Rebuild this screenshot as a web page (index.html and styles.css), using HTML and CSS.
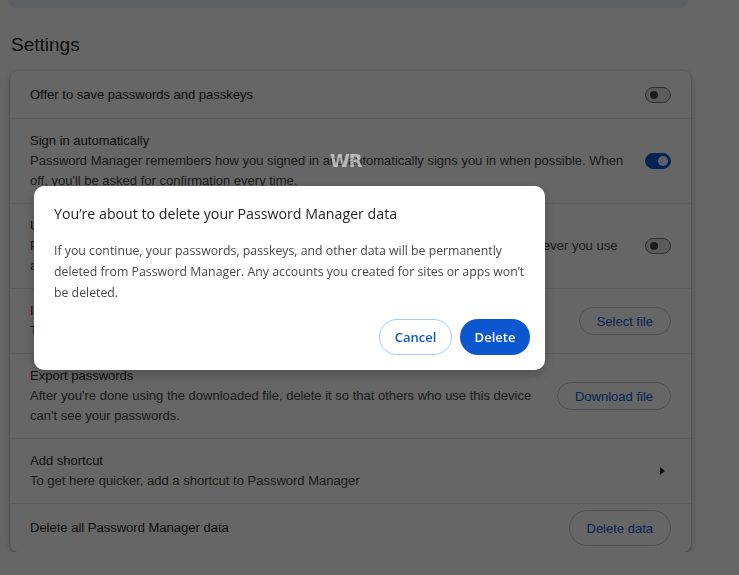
FILE: index.html
```html
<!DOCTYPE html>
<html lang="en">
<head>
    <meta charset="UTF-8">
    <meta name="viewport" content="width=device-width, initial-scale=1.0">
    <title>Password Manager Settings</title>
    <link rel="stylesheet" href="styles.css">
</head>
<body>
    <div class="page">
        <div class="top-card"></div>

        <h1 class="page-title">Settings</h1>

        <div class="card">
            <div class="row row-single">
                <div class="row-text">
                    <div class="label">Offer to save passwords and passkeys</div>
                </div>
                <span class="toggle"></span>
            </div>

            <div class="row">
                <div class="row-text">
                    <div class="label">Sign in automatically</div>
                    <div class="sub">Password Manager remembers how you signed in and automatically signs you in when possible. When off, you'll be asked for confirmation every time.</div>
                </div>
                <span class="toggle on"></span>
            </div>

            <div class="row">
                <div class="row-text">
                    <div class="label">Use Windows Hello when filling passwords</div>
                    <div class="sub">Password Manager will ask you to verify with your Windows Hello PIN or fingerprint whenever you use a saved password.</div>
                </div>
                <span class="toggle"></span>
            </div>

            <div class="row">
                <div class="row-text">
                    <div class="label">Import passwords</div>
                    <div class="sub">To import passwords to Password Manager, select a CSV file.</div>
                </div>
                <button class="btn-outline">Select file</button>
            </div>

            <div class="row">
                <div class="row-text">
                    <div class="label">Export passwords</div>
                    <div class="sub">After you're done using the downloaded file, delete it so that others who use this device can't see your passwords.</div>
                </div>
                <button class="btn-outline">Download file</button>
            </div>

            <div class="row">
                <div class="row-text">
                    <div class="label">Add shortcut</div>
                    <div class="sub">To get here quicker, add a shortcut to Password Manager</div>
                </div>
                <span class="arrow"></span>
            </div>

            <div class="row row-single">
                <div class="row-text">
                    <div class="label">Delete all Password Manager data</div>
                </div>
                <button class="btn-outline tall">Delete data</button>
            </div>
        </div>
    </div>

    <div class="scrim"></div>
    <div class="watermark">WR</div>

    <div class="dialog" role="dialog">
        <h2 class="dialog-title">You’re about to delete your Password Manager data</h2>
        <p class="dialog-body">If you continue, your passwords, passkeys, and other data will be permanently deleted from Password Manager. Any accounts you created for sites or apps won’t be deleted.</p>
        <div class="dialog-buttons">
            <button class="btn-cancel">Cancel</button>
            <button class="btn-delete">Delete</button>
        </div>
    </div>
</body>
</html>
```

FILE: styles.css
```css
body {
    margin: 0;
    padding: 0;
    background-color: #ffffff;
    color: #1f1f1f;
    font-family: 'Liberation Sans', Arial, sans-serif;
    font-size: 13px;
    overflow: hidden;
}

.page {
    padding: 0 48px 0 10px;
}

.top-card {
    height: 8px;
    margin: 0 3px 0 -2px;
    background-color: #e9eef6;
    border-radius: 0 0 14px 14px;
}

.page-title {
    margin: 25px 0 14px 1px;
    font-size: 19px;
    font-weight: normal;
    line-height: 24px;
    color: #1f1f1f;
}

.card {
    background-color: #ffffff;
    border-radius: 8px;
    box-shadow: 0 1px 3px rgba(0, 0, 0, 0.3), 0 2px 6px 1px rgba(0, 0, 0, 0.12);
}

.row {
    display: flex;
    align-items: center;
    gap: 20px;
    min-height: 48px;
    padding: 6px 20px;
    box-sizing: border-box;
    border-bottom: 1px solid #e8e8e8;
}

.row:last-child {
    border-bottom: none;
}

.row-text {
    flex: 1;
    padding: 6px 0;
    line-height: 20px;
}

.label {
    color: #1f1f1f;
}

.sub {
    color: #474747;
}

.toggle {
    position: relative;
    flex: none;
    width: 24px;
    height: 14px;
    border: 1px solid #747775;
    border-radius: 8px;
    background-color: #e3e3e3;
}

.toggle::after {
    content: "";
    position: absolute;
    left: 4px;
    top: 3px;
    width: 8px;
    height: 8px;
    border-radius: 50%;
    background-color: #474747;
}

.toggle.on {
    border-color: #0b57d0;
    background-color: #0b57d0;
}

.toggle.on::after {
    left: 12px;
    top: 2px;
    width: 10px;
    height: 10px;
    background-color: #e8eefa;
}

.btn-outline {
    flex: none;
    height: 28px;
    padding: 0 17px;
    border: 1px solid #c4c7c5;
    border-radius: 16px;
    background: transparent;
    color: #0b57d0;
    font-family: 'Liberation Sans', Arial, sans-serif;
    font-size: 13px;
}

.btn-outline.tall {
    height: 36px;
    border-radius: 18px;
}

.arrow {
    flex: none;
    width: 0;
    height: 0;
    margin-right: 6px;
    border-top: 4px solid transparent;
    border-bottom: 4px solid transparent;
    border-left: 5px solid #1f1f1f;
}

.scrim {
    position: fixed;
    inset: 0;
    background-color: rgba(0, 0, 0, 0.6);
}

.watermark {
    position: fixed;
    left: 330px;
    top: 150px;
    font-family: 'DejaVu Sans', sans-serif;
    font-size: 18px;
    font-weight: bold;
    letter-spacing: -1px;
    color: rgba(255, 255, 255, 0.55);
}

.dialog {
    position: fixed;
    left: 34px;
    top: 186px;
    width: 511px;
    box-sizing: border-box;
    padding: 18px 15px 15px 20px;
    background-color: #ffffff;
    border-radius: 10px;
    box-shadow: 0 4px 12px rgba(0, 0, 0, 0.25);
    font-family: 'Open Sans', sans-serif;
}

.dialog-title {
    margin: 0;
    font-size: 14.2px;
    font-weight: normal;
    line-height: 20px;
    color: #1f1f1f;
}

.dialog-body {
    margin: 16px 5px 0 0;
    font-size: 12.3px;
    line-height: 21px;
    color: #474747;
}

.dialog-buttons {
    display: flex;
    justify-content: flex-end;
    gap: 8px;
    margin-top: 16px;
}

.dialog-buttons button {
    height: 36px;
    border-radius: 18px;
    font-family: 'Open Sans', sans-serif;
    font-size: 13px;
    font-weight: 600;
}

.btn-cancel {
    width: 73px;
    border: 1px solid #a8c7fa;
    background-color: #ffffff;
    color: #0b57d0;
}

.btn-delete {
    width: 70px;
    border: none;
    background-color: #0b57d0;
    color: #ffffff;
}
```
